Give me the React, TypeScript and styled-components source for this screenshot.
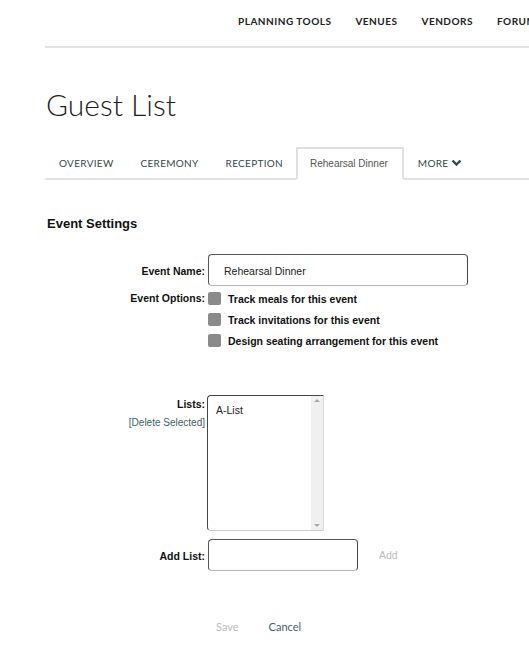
import * as React from 'react';
import styled, { createGlobalStyle } from 'styled-components';

const GlobalStyle = createGlobalStyle`
  body {
    margin: 0;
    background: #fff;
    overflow: hidden;
    font-family: 'Liberation Sans', Arial, sans-serif;
  }
`;

const Page = styled.div`
  width: 529px;
  height: 650px;
  overflow: hidden;
`;

const TopNav = styled.nav`
  display: flex;
  gap: 24px;
  padding: 15px 0 0 238px;
  height: 31px;
  white-space: nowrap;
  font-family: Lato, sans-serif;
  font-weight: 700;
  font-size: 10px;
  letter-spacing: 0.5px;
  color: #222;
`;

const NavItem = styled.span``;

const HeaderRule = styled.div`
  margin-left: 45px;
  border-top: 2px solid #e3e3e3;
`;

const Title = styled.h1`
  margin: 39px 0 0 46px;
  font-family: Lato, sans-serif;
  font-weight: 300;
  font-size: 30px;
  line-height: 35px;
  color: #1e1e1e;
`;

const Tabs = styled.div`
  display: flex;
  align-items: flex-end;
  margin: 25px 0 0 45px;
  height: 31px;
  border-bottom: 2px solid #e2e2e2;
  font-family: Lato, sans-serif;
  font-size: 10px;
`;

const Tab = styled.div<{ $active?: boolean }>`
  display: flex;
  align-items: center;
  gap: 3px;
  height: ${({ $active }) => ($active ? '29px' : '31px')};
  padding: 0 ${({ $active }) => ($active ? '14px' : '13px')} 0 ${({ $active }) => ($active ? '12px' : '14px')};
  margin-bottom: ${({ $active }) => ($active ? '-2px' : '0')};
  border: ${({ $active }) => ($active ? '2px solid #e0e0e0' : 'none')};
  border-bottom: ${({ $active }) => ($active ? '2px solid #fff' : 'none')};
  background: #fff;
  text-transform: ${({ $active }) => ($active ? 'none' : 'uppercase')};
  letter-spacing: ${({ $active }) => ($active ? '0' : '0.3px')};
  font-family: ${({ $active }) => ($active ? "'Liberation Sans', Arial, sans-serif" : 'Lato, sans-serif')};
  color: ${({ $active }) => ($active ? '#555' : '#2f4a4c')};
`;

const SectionTitle = styled.h2`
  margin: 36px 0 0 47px;
  font-size: 13px;
  font-weight: 700;
  color: #111;
`;

const Form = styled.div`
  display: grid;
  grid-template-columns: 205px auto;
  column-gap: 3px;
  margin-top: 23px;
  font-size: 10.5px;
`;

const Label = styled.div<{ $top?: number }>`
  text-align: right;
  font-weight: 700;
  color: #111;
  padding-top: ${({ $top }) => $top ?? 0}px;
`;

const TextInput = styled.div<{ $width: number }>`
  box-sizing: border-box;
  width: ${({ $width }) => $width}px;
  height: 32px;
  border: 1px solid #555;
  border-bottom-color: #bbb;
  border-right-color: #444;
  border-radius: 4px;
  padding: 10px 15px;
  color: #222;
  font-size: 10.5px;
`;

const Options = styled.div`
  display: flex;
  flex-direction: column;
  gap: 8px;
  margin-top: 6px;
`;

const Option = styled.label`
  display: flex;
  align-items: center;
  gap: 7px;
  font-weight: 700;
  color: #111;
`;

const Box = styled.span`
  width: 13px;
  height: 13px;
  border-radius: 2px;
  background: #8a8a8a;
`;

const LinkText = styled.div<{ $muted?: boolean }>`
  color: ${({ $muted }) => ($muted ? '#bdbdbd' : '#3c6466')};
  font-weight: 400;
`;

const DeleteLink = styled(LinkText)`
  font-size: 10px;
`;

const LabelStack = styled.div`
  display: flex;
  flex-direction: column;
  align-items: flex-end;
  gap: 7px;
  padding-top: 3px;
  margin-top: 48px;
  text-align: right;
`;

const ListBox = styled.div`
  box-sizing: border-box;
  display: flex;
  width: 117px;
  height: 136px;
  margin: 48px 0 0 -1px;
  border: 1px solid #444;
  border-right-color: #ddd;
  border-bottom-color: #ccc;
  border-radius: 4px 0 0 4px;
  overflow: hidden;
`;

const ListItems = styled.div`
  flex: 1;
  padding: 8px 8px;
  font-size: 10.5px;
  color: #222;
`;

const Scrollbar = styled.div`
  width: 12px;
  background: #f0f0f0;
  display: flex;
  flex-direction: column;
  justify-content: space-between;
  align-items: center;
  padding: 3px 0;
`;

const Arrow = styled.span<{ $down?: boolean }>`
  width: 0;
  height: 0;
  border-left: 3px solid transparent;
  border-right: 3px solid transparent;
  ${({ $down }) => ($down ? 'border-top: 3px solid #aaa;' : 'border-bottom: 3px solid #aaa;')}
`;

const AddRow = styled.div`
  display: flex;
  align-items: center;
  gap: 21px;
  margin-top: 8px;
`;

const Actions = styled.div`
  display: flex;
  gap: 30px;
  margin: 49px 0 0 216px;
  font-family: Lato, sans-serif;
  font-size: 11px;
`;

const Chevron = () => (
  <svg width="11" height="8" viewBox="0 0 11 8">
    <path d="M1.5 1.5 L5.5 5.5 L9.5 1.5" fill="none" stroke="#2f4a4c" strokeWidth="2.4" />
  </svg>
);

export default function App() {
  return (
    <Page>
      <GlobalStyle />
      <TopNav>
        <NavItem>PLANNING TOOLS</NavItem>
        <NavItem>VENUES</NavItem>
        <NavItem>VENDORS</NavItem>
        <NavItem>FORUMS</NavItem>
      </TopNav>
      <HeaderRule />
      <Title>Guest List</Title>
      <Tabs>
        <Tab>OVERVIEW</Tab>
        <Tab>CEREMONY</Tab>
        <Tab>RECEPTION</Tab>
        <Tab $active>Rehearsal Dinner</Tab>
        <Tab>
          MORE <Chevron />
        </Tab>
      </Tabs>
      <SectionTitle>Event Settings</SectionTitle>
      <Form>
        <Label $top={11}>Event Name:</Label>
        <TextInput $width={260}>Rehearsal Dinner</TextInput>
        <Label $top={6}>Event Options:</Label>
        <Options>
          <Option>
            <Box />
            Track meals for this event
          </Option>
          <Option>
            <Box />
            Track invitations for this event
          </Option>
          <Option>
            <Box />
            Design seating arrangement for this event
          </Option>
        </Options>
        <LabelStack>
          <Label>Lists:</Label>
          <DeleteLink>[Delete Selected]</DeleteLink>
        </LabelStack>
        <ListBox>
          <ListItems>A-List</ListItems>
          <Scrollbar>
            <Arrow />
            <Arrow $down />
          </Scrollbar>
        </ListBox>
        <Label $top={19}>Add List:</Label>
        <AddRow>
          <TextInput $width={150} />
          <LinkText $muted>Add</LinkText>
        </AddRow>
      </Form>
      <Actions>
        <LinkText $muted>Save</LinkText>
        <LinkText>Cancel</LinkText>
      </Actions>
    </Page>
  );
}
